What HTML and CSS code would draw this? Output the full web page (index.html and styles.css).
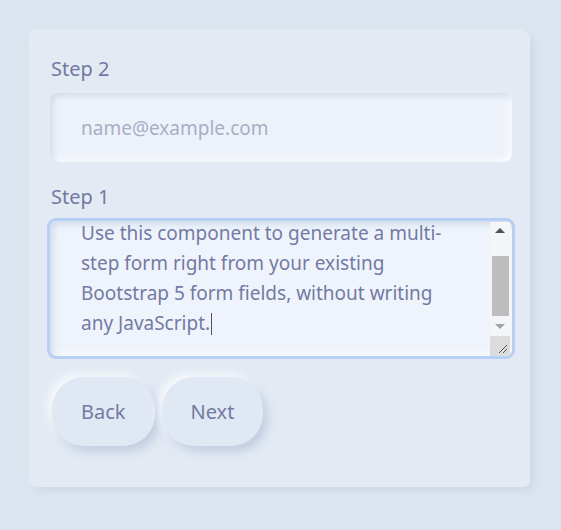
FILE: index.html
```html
<!DOCTYPE html>
<html lang="en">
<head>
<meta charset="utf-8">
<title>Multi-step form</title>
<link rel="stylesheet" href="styles.css">
</head>
<body>
<div class="card">
  <label class="label">Step 2</label>
  <div class="input"><span class="placeholder">name@example.com</span></div>
  <label class="label label-2">Step 1</label>
  <div class="textarea">
    <div class="ta-view">
      <div class="ta-text">Use this component to generate a multi-<br>step form right from your existing<br>Bootstrap 5 form fields, without writing<br>any JavaScript.<span class="caret"></span></div>
    </div>
    <div class="scrollbar">
      <div class="sb-arrow sb-up"></div>
      <div class="sb-track"><div class="sb-thumb"></div></div>
      <div class="sb-arrow sb-down"></div>
      <div class="sb-corner">
        <svg width="20" height="20" viewBox="0 0 20 20"><path d="M9 17 L17 9 M13 17 L17 13" stroke="#555" stroke-width="1" fill="none"/></svg>
      </div>
    </div>
  </div>
  <div class="buttons">
    <button class="btn">Back</button>
    <button class="btn">Next</button>
  </div>
</div>
</body>
</html>
```
FILE: styles.css
```css
html, body {
  margin: 0;
  padding: 0;
}
body {
  background: #dbe4ef;
  font-family: "Noto Sans", Lato, sans-serif;
  width: 561px;
  height: 530px;
  overflow: hidden;
}
.card {
  margin: 33px 0 0 32px;
  width: 498px;
  height: 454px;
  box-sizing: border-box;
  padding: 22px 18px 0 18px;
  background: #e3eaf4;
  border-radius: 6px;
  box-shadow: -2px -2px 5px rgba(255,255,255,0.5), 3px 3px 6px rgba(170,186,210,0.3);
  display: flex;
  flex-direction: column;
}
.label {
  display: block;
  font-size: 20px;
  line-height: 27px;
  color: #7178a2;
  padding-left: 1px;
}
.input {
  margin-top: 11px;
  height: 69px;
  border-radius: 8px;
  background: #edf2fa;
  box-shadow: inset 3px 3px 6px rgba(178,192,216,0.45), inset -3px -3px 6px rgba(255,255,255,0.8);
  display: flex;
  align-items: center;
  padding-left: 31px;
}
.placeholder {
  font-size: 19px;
  color: #a8aec4;
}
.label-2 {
  margin-top: 21px;
}
.textarea {
  margin-top: 8px;
  margin-left: -3px;
  margin-right: -3px;
  height: 141px;
  box-sizing: border-box;
  border: 3px solid #b7cff4;
  border-radius: 9px;
  background: #eff4fc;
  box-shadow: inset 3px 3px 7px rgba(178,192,216,0.5), inset -3px -3px 6px rgba(255,255,255,0.8);
  display: flex;
  overflow: hidden;
}
.ta-view {
  flex: 1;
  overflow: hidden;
  padding-left: 31px;
}
.ta-text {
  margin-top: -3px;
  font-size: 19px;
  line-height: 30px;
  color: #737aa3;
}
.caret {
  display: inline-block;
  width: 1px;
  height: 22px;
  background: #555;
  vertical-align: -5px;
  margin-left: 1px;
}
.scrollbar {
  width: 20px;
  margin: 1px 2px 0 0;
  display: flex;
  flex-direction: column;
  background: #f3f5f9;
}
.sb-arrow {
  height: 17px;
  display: flex;
  align-items: center;
  justify-content: center;
}
.sb-up::before {
  content: "";
  border-left: 5px solid transparent;
  border-right: 5px solid transparent;
  border-bottom: 5px solid #505050;
}
.sb-down::before {
  content: "";
  border-left: 5px solid transparent;
  border-right: 5px solid transparent;
  border-top: 5px solid #a3a3a3;
}
.sb-track {
  flex: 1;
  padding: 17px 1px 0 2px;
}
.sb-thumb {
  height: 60px;
  background: #bdbdbd;
}
.sb-corner {
  height: 20px;
  background: #dcdcdc;
  margin-top: 1px;
}
.sb-corner svg {
  display: block;
}
.buttons {
  margin-top: 18px;
  display: flex;
  gap: 7px;
  padding-left: 2px;
}
.btn {
  height: 69px;
  padding: 0 29px;
  border: none;
  border-radius: 32px;
  background: #e0e8f3;
  font-family: "Noto Sans", Lato, sans-serif;
  font-size: 20px;
  color: #737aa3;
  box-shadow: 5px 6px 10px rgba(168,184,210,0.55), -4px -4px 9px rgba(255,255,255,0.75);
  cursor: pointer;
}
```
